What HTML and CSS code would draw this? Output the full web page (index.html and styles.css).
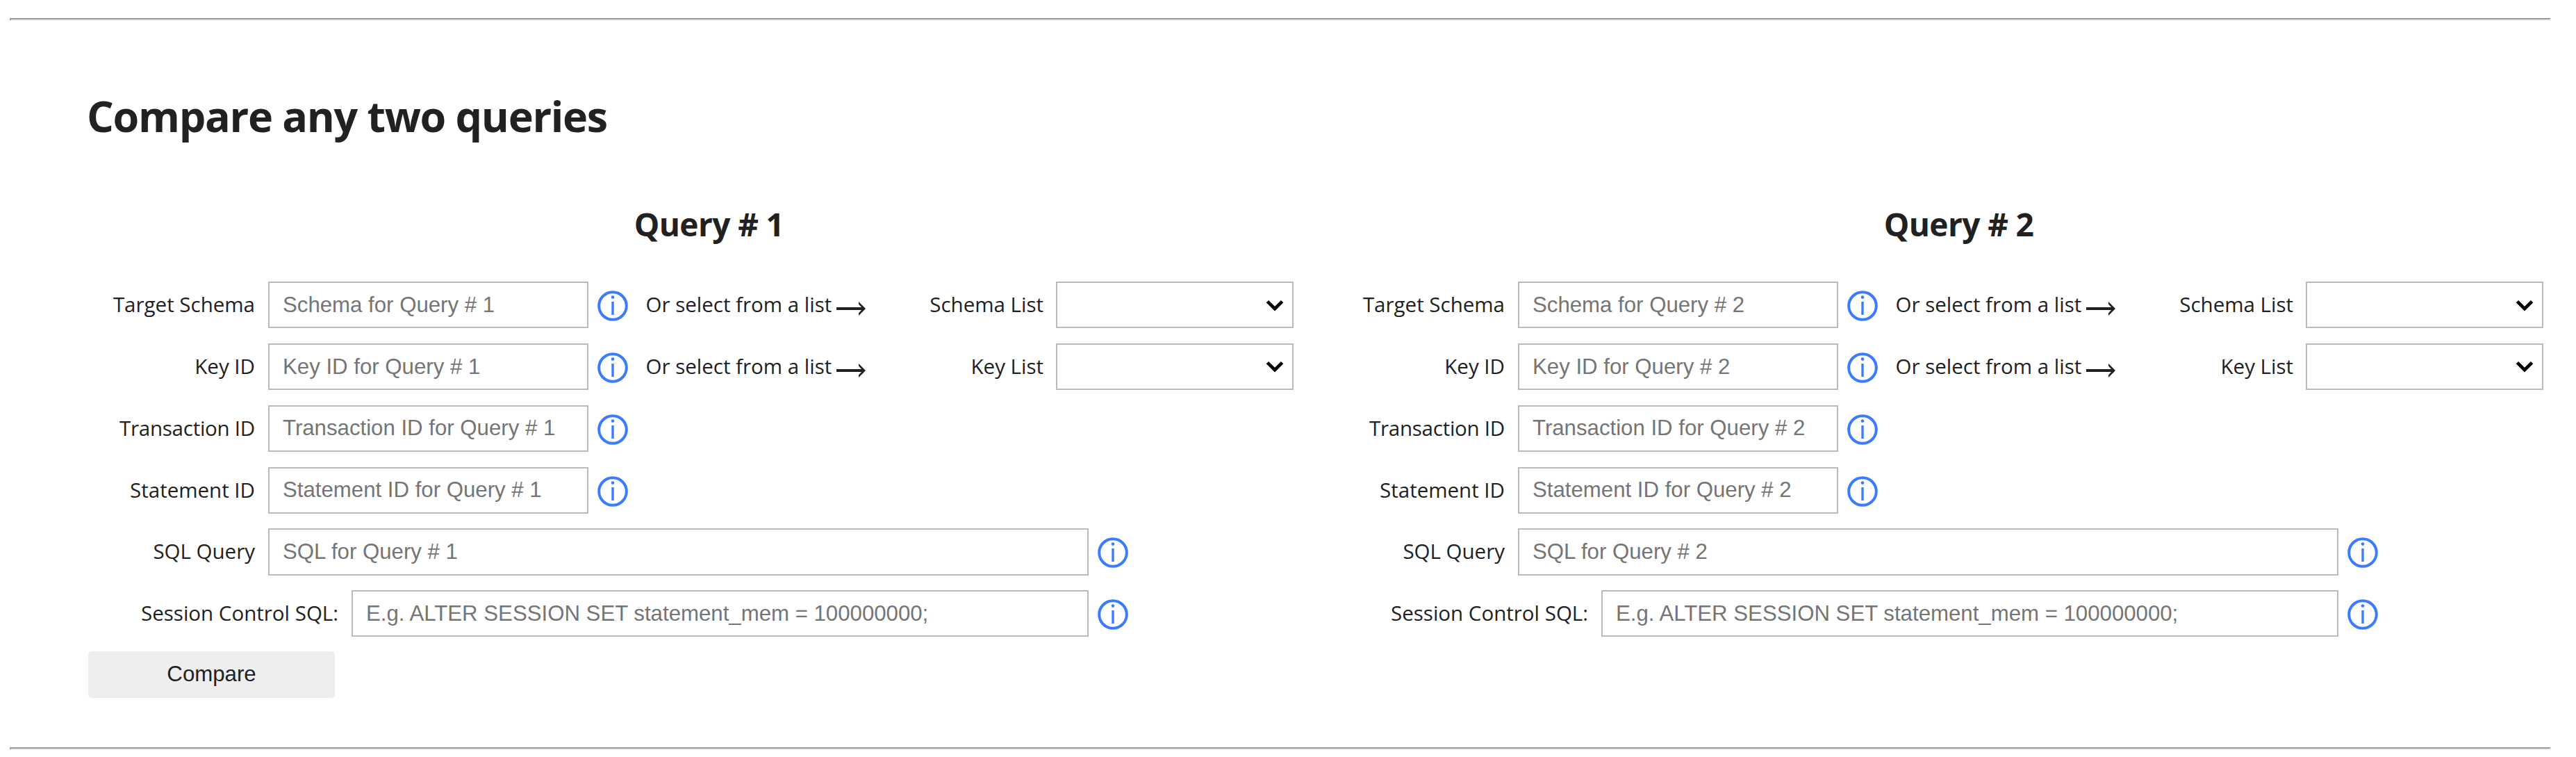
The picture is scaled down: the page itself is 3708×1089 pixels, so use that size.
FILE: index.html
```html
<!DOCTYPE html>
<html lang="en">
<head>
<meta charset="utf-8">
<title>Compare any two queries</title>
<link rel="stylesheet" href="styles.css">
</head>
<body>
<svg class="sprite" width="0" height="0">
  <symbol id="info" viewBox="0 0 44 44">
    <circle cx="22" cy="22" r="19.8" fill="none" stroke="#3b7bff" stroke-width="4"/>
    <circle cx="22" cy="9.6" r="2.3" fill="#3b7bff"/>
    <path d="M22 16v19" stroke="#3b7bff" stroke-width="3.4"/>
  </symbol>
  <symbol id="arrow" viewBox="0 0 42 20">
    <path d="M0 8h36L32 3.4V0L42 10 32 20v-3.4l4-4.6H0z" fill="#212121"/>
  </symbol>
  <symbol id="chevron" viewBox="0 0 26 17">
    <path d="M2.4 2.6L13 13.2L23.6 2.6" fill="none" stroke="#000" stroke-width="4.8"/>
  </symbol>
</svg>
<hr class="rule">
<main class="compare">
  <h1 class="title">Compare any two queries</h1>
  <form class="form">
    <div class="panels">
      <section class="panel">
        <h2 class="heading">Query # 1</h2>
        <div class="row">
          <label class="label">Target Schema</label><input class="field" placeholder="Schema for Query # 1"><svg class="info"><use href="#info"/></svg>
          <span class="hint">Or select from a list</span><svg class="arrow"><use href="#arrow"/></svg>
          <label class="list-label">Schema List</label><div class="select"><svg class="chevron"><use href="#chevron"/></svg></div>
        </div>
        <div class="row">
          <label class="label">Key ID</label><input class="field" placeholder="Key ID for Query # 1"><svg class="info"><use href="#info"/></svg>
          <span class="hint">Or select from a list</span><svg class="arrow"><use href="#arrow"/></svg>
          <label class="list-label">Key List</label><div class="select"><svg class="chevron"><use href="#chevron"/></svg></div>
        </div>
        <div class="row">
          <label class="label tight">Transaction ID</label><input class="field" placeholder="Transaction ID for Query # 1"><svg class="info"><use href="#info"/></svg>
        </div>
        <div class="row">
          <label class="label">Statement ID</label><input class="field" placeholder="Statement ID for Query # 1"><svg class="info"><use href="#info"/></svg>
        </div>
        <div class="row">
          <label class="label">SQL Query</label><input class="field field-sql" placeholder="SQL for Query # 1"><svg class="info"><use href="#info"/></svg>
        </div>
        <div class="row">
          <label class="label label-session">Session Control SQL:</label><input class="field field-session" placeholder="E.g. ALTER SESSION SET statement_mem = 100000000;"><svg class="info"><use href="#info"/></svg>
        </div>
      </section>
      <section class="panel">
        <h2 class="heading">Query # 2</h2>
        <div class="row">
          <label class="label">Target Schema</label><input class="field" placeholder="Schema for Query # 2"><svg class="info"><use href="#info"/></svg>
          <span class="hint">Or select from a list</span><svg class="arrow"><use href="#arrow"/></svg>
          <label class="list-label">Schema List</label><div class="select"><svg class="chevron"><use href="#chevron"/></svg></div>
        </div>
        <div class="row">
          <label class="label">Key ID</label><input class="field" placeholder="Key ID for Query # 2"><svg class="info"><use href="#info"/></svg>
          <span class="hint">Or select from a list</span><svg class="arrow"><use href="#arrow"/></svg>
          <label class="list-label">Key List</label><div class="select"><svg class="chevron"><use href="#chevron"/></svg></div>
        </div>
        <div class="row">
          <label class="label tight">Transaction ID</label><input class="field" placeholder="Transaction ID for Query # 2"><svg class="info"><use href="#info"/></svg>
        </div>
        <div class="row">
          <label class="label">Statement ID</label><input class="field" placeholder="Statement ID for Query # 2"><svg class="info"><use href="#info"/></svg>
        </div>
        <div class="row">
          <label class="label">SQL Query</label><input class="field field-sql" placeholder="SQL for Query # 2"><svg class="info"><use href="#info"/></svg>
        </div>
        <div class="row">
          <label class="label label-session">Session Control SQL:</label><input class="field field-session" placeholder="E.g. ALTER SESSION SET statement_mem = 100000000;"><svg class="info"><use href="#info"/></svg>
        </div>
      </section>
    </div>
    <button class="submit" type="button">Compare</button>
  </form>
</main>
<hr class="rule">
</body>
</html>
```
FILE: styles.css
```css
* { box-sizing: border-box; }

body {
  margin: 0;
  padding: 26px 36px 0 14px;
  height: 1089px;
  overflow: hidden;
  background: #fff;
  color: #212121;
  font-family: "Open Sans", "Noto Sans", sans-serif;
  font-size: 29.5px;
}

.sprite { position: absolute; }

.rule {
  margin: 0;
  height: 4px;
  border: 2px solid;
  border-color: #9a9a9a #eee #eee #9a9a9a;
}

.compare {
  height: 1045px;
  padding: 92px 0 0 113px;
}

.title {
  margin: 0 0 0 -2px;
  height: 90px;
  font-size: 61px;
  line-height: 90px;
  letter-spacing: -1.3px;
}

.form { margin: 0; }

.panels {
  display: grid;
  grid-template-columns: 1799px 1734px;
  padding-top: 78px;
}

.heading {
  width: 1787px;
  height: 64px;
  margin: 0 0 51.2px;
  font-size: 46px;
  line-height: 64px;
  letter-spacing: -0.6px;
  text-align: center;
}

.panel { min-width: 0; }

.row {
  display: flex;
  align-items: center;
  height: 67.2px;
  margin-bottom: 21.6px;
  white-space: nowrap;
}

.label {
  flex: none;
  width: 259px;
  padding: 0 19px 2px 0;
  text-align: right;
}

.label-session { width: 379px; }

.tight { letter-spacing: -0.25px; }

.field,
.select {
  flex: none;
  height: 67.2px;
  border: 2px solid #bbb;
  background: #fff;
}

.field {
  width: 461px;
  margin: 0;
  padding: 0 19px;
  border-radius: 0;
  font: 31.2px "Liberation Sans", Arial, sans-serif;
  outline: 0;
}

.field::placeholder { color: #757575; opacity: 1; }

.field-sql { width: 1181px; }

.field-session { width: 1061px; }

.info {
  flex: none;
  width: 44px;
  height: 44px;
  margin: 3px 0 0 13px;
}

.hint {
  flex: none;
  width: 300px;
  padding: 0 0 2px 25.5px;
}

.arrow {
  flex: none;
  width: 42px;
  height: 20px;
  margin-top: 10px;
}

.list-label {
  flex: none;
  width: 274px;
  padding: 0 18px 2px 0;
  text-align: right;
}

.select {
  display: flex;
  justify-content: flex-end;
  width: 342px;
  padding: 23.5px 12px 0 0;
}

.chevron { width: 26px; height: 17px; }

.submit {
  display: block;
  width: 355px;
  height: 67px;
  margin: -1px 0 0;
  padding: 0;
  border: 0;
  border-radius: 5px;
  background: #eee;
  color: #212121;
  font: 31.2px "Liberation Sans", Arial, sans-serif;
}
```
